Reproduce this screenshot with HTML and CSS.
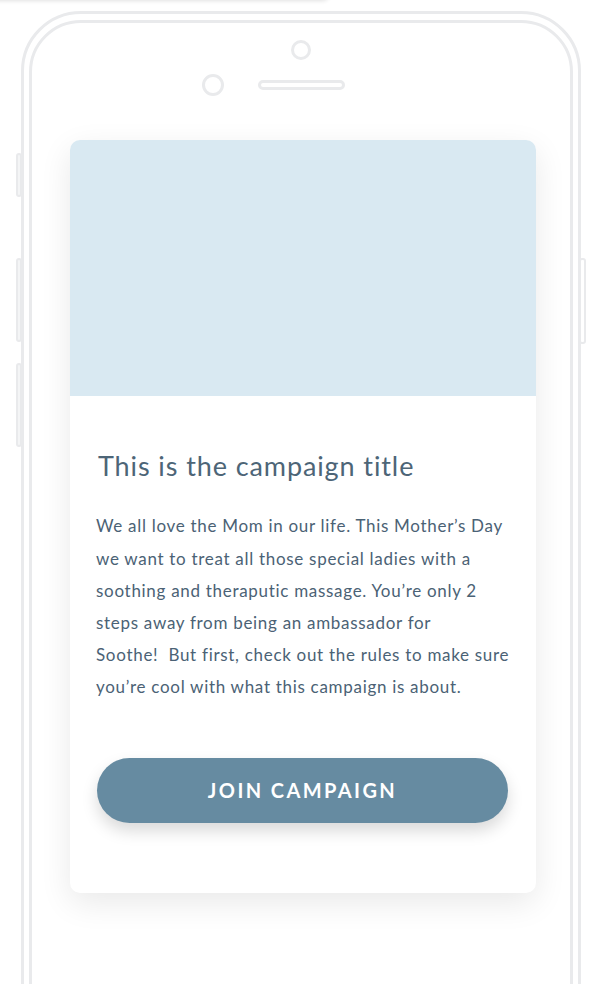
FILE: index.html
```html
<!DOCTYPE html>
<html lang="en">
<head>
    <meta charset="UTF-8">
    <meta name="viewport" content="width=device-width, initial-scale=1.0">
    <title>Join Campaign</title>
    <link rel="stylesheet" href="styles.css">
</head>
<body>
    <div class="top-edge"></div>
    <div class="phone">
        <!-- side buttons -->
        <span class="side-btn side-btn-1"></span>
        <span class="side-btn side-btn-2"></span>
        <span class="side-btn side-btn-3"></span>
        <span class="side-btn side-btn-power"></span>

        <div class="phone-inner">
            <div class="phone-top">
                <div class="camera"></div>
                <div class="sensor-row">
                    <div class="front-cam"></div>
                    <div class="speaker"></div>
                    <div></div>
                </div>
            </div>

            <div class="card">
                <div class="card-image"></div>
                <div class="card-body">
                    <h1 class="card-title">This is the campaign title</h1>
                    <p class="card-text">We all love the Mom in our life. This Mother’s Day we want to treat all those special ladies with a soothing and theraputic massage. You’re only 2 steps away from being an ambassador for<br>Soothe!&nbsp; But first, check out the rules to make sure you’re cool with what this campaign is about.</p>
                    <button class="join-btn">Join Campaign</button>
                </div>
            </div>
        </div>
    </div>
</body>
</html>
```

FILE: styles.css
```css
body {
    margin: 0;
    padding: 11px 0 0 21px;
    background-color: #fff;
    font-family: Lato, "Open Sans", sans-serif;
    overflow: hidden;
    height: 973px;
}
.top-edge {
    position: absolute;
    top: -20px;
    left: -10px;
    width: 340px;
    height: 20px;
    border-radius: 0 0 8px 0;
    background-color: #fff;
    box-shadow: 0 1px 4px rgba(0, 0, 0, 0.12);
}
.phone {
    position: relative;
    width: 554px;
    height: 1100px;
    border: 3px solid #e9eaec;
    border-radius: 60px;
}
.phone-inner {
    margin: 6px 5px 0 5px;
    height: 1080px;
    border: 3px solid #e9eaec;
    border-radius: 52px;
}
.side-btn {
    position: absolute;
    width: 2px;
    border: 2px solid #e9eaec;
    border-radius: 3px;
    background-color: #f4f5f6;
}
.side-btn-1 {
    left: -8px;
    top: 139px;
    height: 40px;
}
.side-btn-2 {
    left: -8px;
    top: 244px;
    height: 80px;
}
.side-btn-3 {
    left: -8px;
    top: 349px;
    height: 80px;
}
.side-btn-power {
    left: 555px;
    top: 244px;
    width: 3px;
    height: 82px;
    background-color: #fff;
}
.phone-top {
    padding-top: 17px;
    height: 100px;
}
.camera {
    width: 14px;
    height: 14px;
    margin: 0 auto;
    border: 3px solid #e9eaec;
    border-radius: 50%;
}
.sensor-row {
    display: grid;
    grid-template-columns: 1fr auto 1fr;
    align-items: center;
    margin-top: 14px;
}
.front-cam {
    justify-self: end;
    width: 16px;
    height: 16px;
    margin-right: 34px;
    border: 3px solid #e9eaec;
    border-radius: 50%;
}
.speaker {
    width: 81px;
    height: 4px;
    border: 3px solid #e9eaec;
    border-radius: 6px;
}
.card {
    width: 466px;
    margin-left: 38px;
    background-color: #fff;
    border-radius: 10px;
    overflow: hidden;
    box-shadow: 0 10px 32px rgba(0, 0, 0, 0.09);
}
.card-image {
    height: 256px;
    background-color: #d9e9f2;
}
.card-body {
    padding: 54px 26px 70px 26px;
}
.card-title {
    margin: 0 0 28px 2px;
    font-size: 27px;
    font-weight: 400;
    letter-spacing: 0.9px;
    color: #4d6577;
    line-height: 32.4px;
}
.card-text {
    margin: 0;
    font-size: 17px;
    letter-spacing: 0.7px;
    line-height: 32.2px;
    color: #4b6275;
}
.join-btn {
    display: block;
    width: 411px;
    height: 65px;
    margin: 54px 0 0 1px;
    border: none;
    border-radius: 33px;
    background-color: #668ba1;
    color: #fff;
    font-family: Lato, sans-serif;
    font-size: 20px;
    font-weight: 700;
    letter-spacing: 2.4px;
    text-transform: uppercase;
    box-shadow: 0 8px 16px rgba(0, 0, 0, 0.15);
}
```
